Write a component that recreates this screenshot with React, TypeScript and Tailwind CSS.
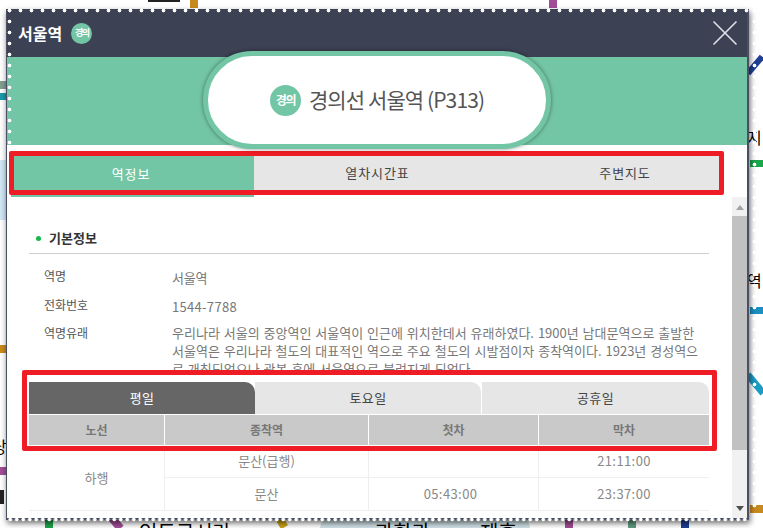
import React from "react";
import { X } from "lucide-react";

const rows = [
  { dest: "문산(급행)", first: "", last: "21:11:00" },
  { dest: "문산", first: "05:43:00", last: "23:37:00" },
];

function LineBadge({ big }: { big?: boolean }) {
  return (
    <span
      className={`inline-flex shrink-0 items-center justify-center rounded-full bg-[#73c6a5] font-bold text-white ${
        big ? "h-[31px] w-[31px] text-[12px] tracking-[-1.5px]" : "h-[21px] w-[21px] text-[9px] tracking-[-1.5px]"
      }`}
    >
      경의
    </span>
  );
}

function MapBits() {
  return (
    <>
      <div className="absolute left-[148px] top-0 h-[2px] w-[32px] bg-[#222]" />
      <div className="absolute left-[190px] top-0 h-2 w-2 bg-[#c98a1c]" />
      <div className="absolute left-[549px] top-0 h-2 w-2 bg-[#a24d96]" />
      <div className="absolute left-0 top-[81px] h-2 w-[7px] bg-[#7f9f8f]" />
      <div className="absolute left-0 top-[93px] h-[7px] w-[7px] bg-[#1b9aaa]" />
      <div className="absolute left-0 top-[160px] h-[60px] w-[7px] bg-[#cfe6f3]" />
      <div className="absolute left-0 top-[345px] h-2 w-[7px] bg-[#c98a1c]" />
      <div className="absolute left-0 top-[467px] h-2 w-[7px] bg-[#a24d96]" />
      <div className="absolute left-0 top-[490px] h-[14px] w-[4px] bg-[#222]" />
      <div className="absolute left-[752px] top-[54px] h-[22px] w-[6px] rotate-[40deg] bg-[#1d3f94]" />
      <div className="absolute left-[750px] top-[160px] h-[7px] w-[13px] bg-[#1aa64b]" />
      <div className="absolute left-[750px] top-[307px] h-[7px] w-[13px] bg-[#1a8fc4]" />
      <div className="absolute left-[752px] top-[372px] h-6 w-[7px] rotate-[-40deg] bg-[#1a9cc4]" />
      <div className="absolute left-[750px] top-[505px] h-2 w-[13px] bg-[#c98a1c]" />
      <div className="absolute left-[320px] top-[518px] h-[10px] w-[210px] rounded-t-[10px] bg-[#cfe0e6]" />
      <div className="absolute left-[45px] top-[518px] h-[10px] w-2 bg-[#1aa64b]" />
      <div className="absolute left-[112px] top-[516px] h-[14px] w-2 rotate-[-40deg] bg-[#a24d96]" />
      <div className="absolute left-[278px] top-[518px] h-[10px] w-2 rotate-[-30deg] bg-[#c9a31c]" />
      <div className="absolute left-[565px] top-[518px] h-[10px] w-2 bg-[#a24d96]" />
      <div className="absolute left-[628px] top-[518px] h-[10px] w-2 bg-[#5f9b80]" />
      <div className="absolute left-[681px] top-[518px] h-[10px] w-2 bg-[#1d3f94]" />
      <span className="absolute left-[-8px] top-[434px] text-[16px] text-black">당</span>
      <span className="absolute left-[747px] top-[125px] text-[16px] text-black">지</span>
      <span className="absolute left-[747px] top-[268px] text-[16px] text-black">역</span>
      <span className="absolute left-[139px] top-[519px] text-[20px] leading-[26px] text-black">인도로시라</span>
      <span className="absolute left-[375px] top-[519px] text-[20px] leading-[26px] text-black">과학과</span>
      <span className="absolute left-[480px] top-[519px] text-[20px] leading-[26px] text-black">제휴</span>
    </>
  );
}

function Dots() {
  const dot = "absolute bg-[radial-gradient(circle,#ffffff_1.6px,transparent_2.2px)] bg-[length:11px_11px]";
  return (
    <>
      <div className={`${dot} left-[4px] top-[5px] h-[11px] w-[749px]`} />
      <div className={`${dot} left-[4px] top-[5px] h-[187px] w-[11px]`} />
      <div className={`${dot} right-[3px] top-[5px] h-[506px] w-[11px]`} />
      <div className="absolute left-[7px] top-[517px] h-[5px] w-[742px] bg-[radial-gradient(circle,#ffffff_1.6px,transparent_2.2px)] bg-[length:6.5px_5px]" />
    </>
  );
}

export default function App() {
  return (
    <div className="relative h-[528px] w-[763px] overflow-hidden bg-white font-['Noto_Sans_CJK_KR','Noto_Sans',sans-serif]">
      <MapBits />

      <div className="absolute left-[6px] top-[9px] flex h-[511px] w-[743px] flex-col overflow-hidden border-r-2 border-b-2 border-l border-[#4a4f63] bg-white shadow-[1px_3px_6px_rgba(0,0,0,0.6)]">
        <header className="flex h-[48px] shrink-0 items-center justify-between bg-[#3c4154] pl-[11px] text-white">
          <div className="flex items-center gap-[9px]">
            <span className="text-[16px] font-bold">서울역</span>
            <LineBadge />
          </div>
          <X className="h-[44px] w-[44px] text-[#dfe1e6]" strokeWidth={0.9} />
        </header>

        <div className="flex h-[88px] shrink-0 items-start justify-center bg-[#73c6a5]">
          <div className="z-10 -mt-[6px] flex h-[98px] w-[348px] items-center justify-center gap-[8px] rounded-full border-[5px] border-[#73c6a5] bg-white shadow-[0_0_4px_rgba(0,0,0,0.45)]">
            <LineBadge big />
            <span className="text-[21px] tracking-[-0.9px] text-[#555]">경의선 서울역 (P313)</span>
          </div>
        </div>

        <nav className="mt-[10px] flex h-[42px] shrink-0 pr-[25px] pl-[4px] text-[13px] tracking-[0.9px]">
          <div className="flex h-[42px] w-[243px] items-center justify-center bg-[#73c6a5] pr-[3px] pb-[4px] text-white">역정보</div>
          <div className="flex h-[40px] flex-1 bg-[#e6e6e6] pb-[4px] text-[#444]">
            <div className="flex w-[247px] items-center justify-center">열차시간표</div>
            <div className="flex flex-1 items-center justify-center pl-[27px]">주변지도</div>
          </div>
        </nav>

        <div className="flex min-h-0 flex-1">
          <div className="min-w-0 flex-1 overflow-hidden pt-[26px] pr-[23px] pl-[22px]">
            <h2 className="flex h-[31px] items-center gap-[8px] border-b border-[#cfcfcf] pl-[7px] text-[13px] font-bold text-[#333]">
              <span className="h-[5px] w-[5px] rounded-full bg-[#12b84a]" />
              기본정보
            </h2>

            <dl className="mt-[13px] text-[12px] text-[#777]">
              <div className="flex h-[29px]">
                <dt className="w-[143px] pl-[15px] leading-[18px] text-[#555]">역명</dt>
                <dd className="pt-[2px] text-[13px] leading-[18px] tracking-[-0.2px]">서울역</dd>
              </div>
              <div className="flex h-[28px]">
                <dt className="w-[143px] pl-[15px] leading-[18px] text-[#555]">전화번호</dt>
                <dd className="pt-[2px] text-[13px] leading-[18px] tracking-[0.3px]">1544-7788</dd>
              </div>
              <div className="flex h-[46px] overflow-hidden">
                <dt className="w-[143px] shrink-0 pl-[15px] leading-[18px] text-[#555]">역명유래</dt>
                <dd className="whitespace-nowrap text-[13px] leading-[18px] [word-spacing:1px]">
                  <span className="block">우리나라 서울의 중앙역인 서울역이 인근에 위치한데서 유래하였다. 1900년 남대문역으로 출발한</span>
                  <span className="block">서울역은 우리나라 철도의 대표적인 역으로 주요 철도의 시발점이자 종착역이다. 1923년 경성역으</span>
                  <span className="block">로 개칭되었으나 광복 후에 서울역으로 불려지게 되었다.</span>
                </dd>
              </div>
            </dl>

            <div className="mt-[12px] flex h-[32px] text-[13px] tracking-[0.4px]">
              <div className="flex w-[226px] items-center justify-center rounded-tr-[10px] bg-[#666] text-white">평일</div>
              <div className="flex w-[226px] items-center justify-center rounded-tr-[10px] bg-[#e6e6e6] text-[#444]">토요일</div>
              <div className="ml-px flex flex-1 items-center justify-center rounded-tr-[10px] bg-[#e6e6e6] text-[#444]">공휴일</div>
            </div>

            <div className="mt-px grid grid-cols-[135px_204px_170px_171px] text-center text-[13px]">
              <div className="flex h-[30px] items-center justify-center bg-[#c9c9c9] text-[12px] font-bold text-[#777]">노선</div>
              <div className="flex h-[30px] items-center justify-center border-l border-white bg-[#c9c9c9] text-[12px] font-bold text-[#777]">종착역</div>
              <div className="flex h-[30px] items-center justify-center border-l border-white bg-[#c9c9c9] text-[12px] font-bold text-[#777]">첫차</div>
              <div className="flex h-[30px] items-center justify-center border-l border-white bg-[#c9c9c9] text-[12px] font-bold text-[#777]">막차</div>
              <div className="row-span-2 flex items-center justify-center border-b border-[#eee] text-[#888]">하행</div>
              {rows.map((r) => (
                <React.Fragment key={r.dest}>
                  <div className="flex h-[33px] items-center justify-center border-b border-l border-[#eee] text-[#888]">{r.dest}</div>
                  <div className="flex h-[33px] items-center justify-center border-b border-l border-[#eee] pr-[6px] tracking-[0.4px] text-[#888]">{r.first}</div>
                  <div className="flex h-[33px] items-center justify-center border-b border-l border-[#eee] tracking-[0.4px] text-[#888]">{r.last}</div>
                </React.Fragment>
              ))}
            </div>
          </div>

          <div className="flex w-[15px] shrink-0 flex-col items-center bg-[#f1f1f1]">
            <svg className="mt-[8px] h-[5px] w-[8px]" viewBox="0 0 8 5"><path d="M4 0 8 5H0z" fill="#a3a3a3" /></svg>
            <div className="mt-[6px] h-[234px] w-full bg-[#c1c1c1]" />
            <svg className="mt-auto mb-[7px] h-[5px] w-[8px]" viewBox="0 0 8 5"><path d="M4 5 8 0H0z" fill="#505050" /></svg>
          </div>
        </div>
      </div>

      <Dots />

      <div className="absolute left-[9px] top-[151px] h-[44px] w-[715px] rounded-[2px] border-[5px] border-[#ee1c25]" />
      <div className="absolute left-[22px] top-[370px] h-[81px] w-[695px] rounded-[2px] border-[5px] border-[#ee1c25]" />
    </div>
  );
}
